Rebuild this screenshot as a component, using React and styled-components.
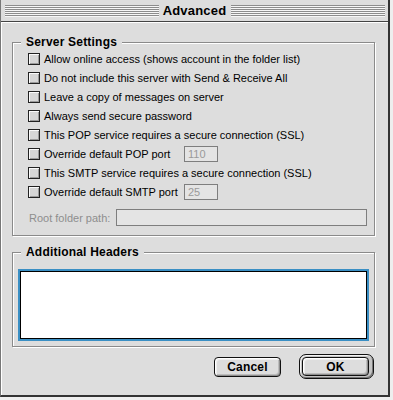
import styled, { createGlobalStyle } from "styled-components";

const GlobalStyle = createGlobalStyle`
    html, body {
        margin: 0;
        padding: 0;
        background: #eeeeee;
    }
    body {
        font-family: "Liberation Sans", Arial, sans-serif;
    }
`;

const Window = styled.div`
    box-sizing: border-box;
    width: 390px;
    height: 397px;
    display: flex;
    flex-direction: column;
    background: #dddddd;
    border-left: 1px solid #777;
    border-right: 2px solid #333;
    border-bottom: 2px solid #333;
`;

const TitleBar = styled.div`
    height: 21px;
    border-bottom: 1px solid #444;
    display: flex;
    align-items: center;
    padding: 0 3px 0 4px;
    background: #dddddd;
`;

const Stripes = styled.div`
    flex: 1;
    height: 12px;
    background: repeating-linear-gradient(to bottom, #8c8c8c 0 1px, #f6f6f6 1px 2px);
`;

const Title = styled.div`
    padding: 0 5px 0 4px;
    font-size: 13px;
    font-weight: bold;
    color: #000;
    line-height: 14px;
    letter-spacing: 0.2px;
`;

const Body = styled.div`
    flex: 1;
    display: flex;
    flex-direction: column;
    padding: 20px 13px 0 11px;
    box-shadow: inset 1px 1px 0 #fff;
`;

const Group = styled.div`
    display: flex;
    flex-direction: column;
    border: 1px solid #8a8a8a;
    box-shadow: inset 1px 1px 0 #fff, 1px 1px 0 #fff;
    margin-top: ${(p) => p.$gap || 0}px;
    padding: 0 ${(p) => p.$padX || 0}px ${(p) => p.$padBottom || 0}px ${(p) => p.$padLeft || 0}px;
`;

/* legend sits over the group's top line, text starts 13px in from the border */
const Legend = styled.div`
    align-self: flex-start;
    margin: -8px 0 0 ${(p) => 8 - (p.$inset || 0)}px;
    padding: 0 5px;
    background: #dddddd;
    font-size: 12px;
    font-weight: bold;
    line-height: 14px;
    letter-spacing: 0.2px;
    color: #000;
`;

const Row = styled.label`
    height: 19px;
    display: flex;
    align-items: center;
    font-size: 11px;
    color: #000;
`;

const Check = styled.span`
    box-sizing: border-box;
    width: 12px;
    height: 12px;
    flex: none;
    margin-right: 4px;
    border: 1px solid #222;
    background: #d6d6d6;
    box-shadow: inset 1px 1px 0 #fafafa, inset -1px -1px 0 #9a9a9a;
`;

const CheckText = styled.span`
    white-space: nowrap;
    width: ${(p) => (p.$width ? `${p.$width}px` : "auto")};
`;

const Field = styled.div`
    box-sizing: border-box;
    height: ${(p) => p.$height || 16}px;
    width: ${(p) => (p.$width ? `${p.$width}px` : "auto")};
    flex: ${(p) => (p.$width ? "none" : 1)};
    border: 1px solid #7e7e7e;
    background: #e4e4e4;
    color: #9a9a9a;
    font-size: 11px;
    line-height: 14px;
    padding-left: 3px;
`;

const PathRow = styled.div`
    display: flex;
    align-items: center;
    margin: 8px 7px 0 1px;
`;

const PathLabel = styled.span`
    width: 87px;
    flex: none;
    font-size: 11px;
    color: #8e8e8e;
`;

const TextArea = styled.div`
    box-sizing: border-box;
    height: 68px;
    margin-top: 12px;
    background: #fff;
    border: 1px solid #000;
    box-shadow: 0 0 0 2px #3a8fc4;
`;

const ButtonRow = styled.div`
    display: flex;
    justify-content: flex-end;
    align-items: center;
    gap: 18px;
    margin: 7px 1px 0 0;
`;

const Button = styled.button`
    box-sizing: border-box;
    width: ${(p) => p.$width}px;
    height: ${(p) => p.$height || 20}px;
    border: 1px solid #111;
    border-radius: 4px;
    background: #dddddd;
    box-shadow: inset 1px 1px 0 #fff, inset -1px -1px 0 #8e8e8e, inset 2px 2px 0 #eee, inset -2px -2px 0 #bcbcbc;
    font-family: "Liberation Sans", Arial, sans-serif;
    font-size: 12px;
    font-weight: bold;
    letter-spacing: 0.2px;
    color: #000;
    padding: 0;
`;

const DefaultRing = styled.div`
    box-sizing: border-box;
    display: flex;
    padding: 2px;
    width: 75px;
    height: 25px;
    border: 1px solid #111;
    border-radius: 7px;
    background: #c4c4c4;
    box-shadow: inset 1px 1px 0 #f4f4f4, inset -1px -1px 0 #777;
`;

const options = [
    { label: "Allow online access (shows account in the folder list)" },
    { label: "Do not include this server with Send & Receive All" },
    { label: "Leave a copy of messages on server" },
    { label: "Always send secure password" },
    { label: "This POP service requires a secure connection (SSL)" },
    { label: "Override default POP port", port: "110" },
    { label: "This SMTP service requires a secure connection (SSL)" },
    { label: "Override default SMTP port", port: "25" },
];

export default function App() {
    return (
        <>
            <GlobalStyle />
            <Window>
                <TitleBar>
                    <Stripes />
                    <Title>Advanced</Title>
                    <Stripes />
                </TitleBar>
                <Body>
                    <Group $padLeft={15} $padBottom={9}>
                        <Legend $inset={15}>Server Settings</Legend>
                        {options.map((o) => (
                            <Row key={o.label}>
                                <Check />
                                <CheckText $width={o.port ? 140 : 0}>{o.label}</CheckText>
                                {o.port && <Field $width={34}>{o.port}</Field>}
                            </Row>
                        ))}
                        <PathRow>
                            <PathLabel>Root folder path:</PathLabel>
                            <Field $height={17} />
                        </PathRow>
                    </Group>
                    <Group $gap={16} $padLeft={7} $padX={7} $padBottom={7}>
                        <Legend $inset={7}>Additional Headers</Legend>
                        <TextArea />
                    </Group>
                    <ButtonRow>
                        <Button $width={67}>Cancel</Button>
                        <DefaultRing>
                            <Button $width={67} $height={19}>OK</Button>
                        </DefaultRing>
                    </ButtonRow>
                </Body>
            </Window>
        </>
    );
}
